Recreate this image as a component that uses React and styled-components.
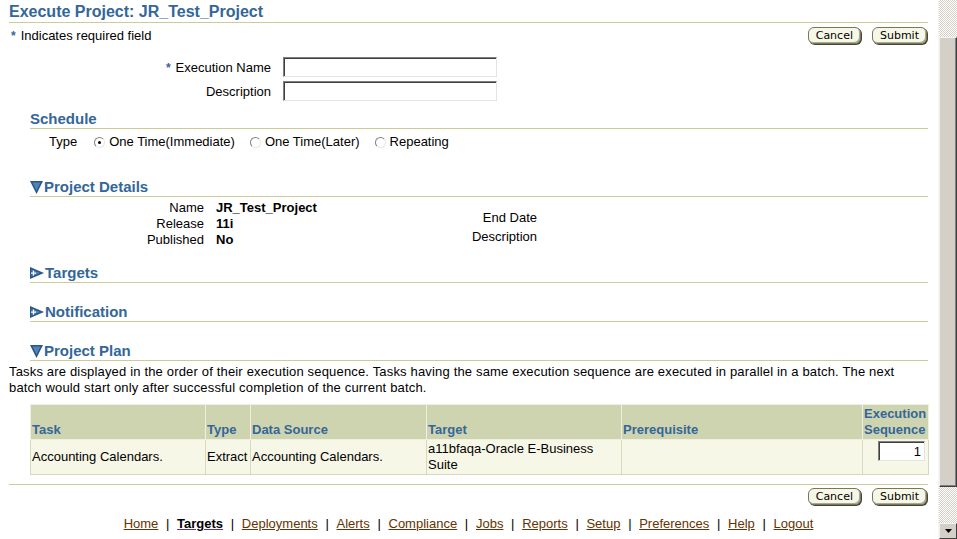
import React from "react"
import styled, { createGlobalStyle } from "styled-components"

const blue = "#336699"
const olive = "#cccc99"

const GlobalStyle = createGlobalStyle`
  html, body {
    margin: 0;
    padding: 0;
    overflow: hidden;
    background: #fff;
  }
  body {
    font-family: "Liberation Sans", Arial, sans-serif;
    font-size: 13px;
    color: #000;
  }
`

const Page = styled.div`
  display: flex;
  height: 539px;
  width: 957px;
`

const Main = styled.div`
  flex: 1;
  padding: 2px 10px 0 9px;
  overflow: hidden;
`

const Title = styled.h1`
  margin: 0;
  font-size: 16px;
  line-height: 20px;
  font-weight: bold;
  color: ${blue};
  border-bottom: 1px solid ${olive};
`

const TopRow = styled.div`
  display: flex;
  align-items: center;
  justify-content: space-between;
  padding-top: ${p => p.top || 4}px;
  padding-right: 1px;
`

const Required = styled.span`
  color: ${blue};
  font-size: 12px;
  font-weight: bold;
  margin-right: 5px;
  margin-left: ${p => p.left || 0}px;
`

const Buttons = styled.div`
  display: flex;
  gap: 11px;
`

const Button = styled.button`
  height: 17px;
  padding: 0 7px;
  font-family: "DejaVu Sans", Verdana, sans-serif;
  font-size: 11px;
  line-height: 14px;
  color: #000;
  background: #f7f7e7;
  border: 1px solid #77775e;
  border-radius: 6px;
  box-shadow: inset -1px -1px 0 #a9a98c, 1px 1px 0 #44443a;
  cursor: pointer;
`

const Form = styled.div`
  display: grid;
  grid-template-columns: 262px 214px;
  column-gap: 12px;
  row-gap: 4px;
  margin-top: 13px;
  align-items: center;
`

const Label = styled.label`
  text-align: right;
`

const TextInput = styled.input`
  box-sizing: border-box;
  width: ${p => p.w || 214}px;
  height: 20px;
  margin: 0;
  padding: 0 3px;
  font-family: "Liberation Sans", Arial, sans-serif;
  font-size: 13px;
  text-align: ${p => (p.right ? "right" : "left")};
  background: #fff;
  border: 1px solid;
  border-color: #7f7f7f #e4e4dc #e4e4dc #7f7f7f;
  box-shadow: inset 1px 1px 0 #404040;
  outline: none;
`

const Section = styled.div`
  margin-left: 21px;
  margin-top: ${p => p.top}px;
`

const Header = styled.h2`
  display: flex;
  align-items: center;
  gap: 1px;
  margin: 0;
  font-size: 15px;
  line-height: 18px;
  font-weight: bold;
  color: ${blue};
  border-bottom: 1px solid ${olive};
`

const TypeRow = styled.div`
  display: flex;
  align-items: center;
  padding: 4px 0 0 19px;
  line-height: 18px;
`

const TypeLabel = styled.span`
  margin-right: 17px;
`

const RadioItem = styled.label`
  display: flex;
  align-items: center;
  gap: 4px;
  margin-right: 15px;
`

const RadioCircle = styled.span`
  position: relative;
  box-sizing: border-box;
  width: 11px;
  height: 11px;
  border-radius: 50%;
  border: 1px solid;
  border-color: #808080 #e8e8e8 #e8e8e8 #808080;
  background: #fff;
  &::after {
    content: "";
    display: ${p => (p.checked ? "block" : "none")};
    position: absolute;
    left: 3px;
    top: 3px;
    width: 3px;
    height: 3px;
    border-radius: 50%;
    background: #000;
  }
`

const Details = styled.div`
  display: flex;
  padding-top: 3px;
  line-height: 16px;
`

const DetailGrid = styled.div`
  display: grid;
  grid-template-columns: ${p => p.cols};
  column-gap: 12px;
  padding-top: ${p => p.top || 0}px;
`

const DLabel = styled.span`
  text-align: right;
`

const DValue = styled.span`
  font-weight: bold;
`

const Para = styled.p`
  margin: 0;
  padding-top: 3px;
  line-height: 16px;
  letter-spacing: 0.17px;
`

const Table = styled.table`
  margin: 8px 0 0 21px;
  width: 898px;
  table-layout: fixed;
  border-collapse: collapse;
  border: 1px solid #dcdfc6;
`

const Th = styled.th`
  height: 33px;
  padding: 0 1px 1px 1px;
  text-align: left;
  vertical-align: bottom;
  font-size: 13px;
  line-height: 16px;
  font-weight: bold;
  color: ${blue};
  background: #cfd4b0;
  border: 1px solid #eef0e2;
  overflow: hidden;
`

const Td = styled.td`
  padding: 1px ${p => (p.right ? 3 : 1)}px 1px 1px;
  vertical-align: ${p => (p.top ? "top" : "middle")};
  text-align: ${p => (p.right ? "right" : "left")};
  font-size: 13px;
  line-height: 16px;
  background: #f7f7e7;
  border: 1px solid #d6d9be;
`

const Divider = styled.div`
  margin-top: 9px;
  border-top: 1px solid ${olive};
`

const Footer = styled.div`
  display: flex;
  justify-content: center;
  margin-top: 11px;
  line-height: 16px;
  font-size: 13px;
`

const FootLink = styled.a`
  color: ${p => (p.active ? "#000" : "#663300")};
  font-weight: ${p => (p.active ? "bold" : "normal")};
  text-decoration: underline;
  text-decoration-color: ${p => (p.active ? "#663366" : "#663300")};
  cursor: pointer;
`

const Sep = styled.span`
  margin: 0 7.7px;
  color: #000;
`

const ScrollBar = styled.div`
  display: flex;
  flex-direction: column;
  width: 19px;
  border-left: 1px solid #f4f4f0;
  box-sizing: border-box;
`

const Track = styled.div`
  height: ${p => (p.h ? p.h + "px" : "auto")};
  flex: ${p => (p.h ? "none" : 1)};
  background-color: #fff;
  background-image: repeating-conic-gradient(#d4d0c8 0 25%, #fff 0 50%);
  background-size: 2px 2px;
`

const Thumb = styled.div`
  height: 450px;
  box-sizing: border-box;
  background: #d4d0c8;
  border: 1px solid;
  border-color: #f2f2ee #404040 #404040 #f2f2ee;
  box-shadow: inset -1px -1px 0 #808080;
`

const ArrowBtn = styled.div`
  height: 16px;
  display: flex;
  align-items: center;
  justify-content: center;
  box-sizing: border-box;
  background: #d4d0c8;
  border: 1px solid;
  border-color: #f2f2ee #404040 #404040 #f2f2ee;
`

const DownIcon = () => (
  <svg width="13" height="13" viewBox="0 0 13 13">
    <polygon points="0,0 13,0 6.5,13" fill="#2a5885" />
    <polygon points="2.5,1.5 10.5,1.5 6.5,9.5" fill="#4f82b5" />
  </svg>
)

const RightIcon = () => (
  <svg width="14" height="12" viewBox="0 0 14 12">
    <polygon points="0,0 14,6 0,12" fill="#2a5885" />
    <polygon points="1.5,2.5 10,6 1.5,9.5" fill="#4f82b5" />
    <rect x="1" y="5.5" width="5" height="1.2" fill="#fff" />
    <rect x="2.9" y="3.6" width="1.2" height="5" fill="#fff" />
  </svg>
)

const Radio = ({ checked, children }) => (
  <RadioItem>
    <RadioCircle checked={checked} />
    {children}
  </RadioItem>
)

const links = ["Home", "Targets", "Deployments", "Alerts", "Compliance", "Jobs", "Reports", "Setup", "Preferences", "Help", "Logout"]

export default function App() {
  return (
    <Page>
      <GlobalStyle />
      <Main>
        <Title>Execute Project: JR_Test_Project</Title>
        <TopRow>
          <span>
            <Required left={2}>*</Required>Indicates required field
          </span>
          <Buttons>
            <Button>Cancel</Button>
            <Button>Submit</Button>
          </Buttons>
        </TopRow>

        <Form>
          <Label>
            <Required>*</Required>Execution Name
          </Label>
          <TextInput />
          <Label>Description</Label>
          <TextInput />
        </Form>

        <Section top={9}>
          <Header>Schedule</Header>
          <TypeRow>
            <TypeLabel>Type</TypeLabel>
            <Radio checked>One Time(Immediate)</Radio>
            <Radio>One Time(Later)</Radio>
            <Radio>Repeating</Radio>
          </TypeRow>
        </Section>

        <Section top={27}>
          <Header>
            <DownIcon />
            Project Details
          </Header>
          <Details>
            <DetailGrid cols="174px 244px">
              <DLabel>Name</DLabel>
              <DValue>JR_Test_Project</DValue>
              <DLabel>Release</DLabel>
              <DValue>11i</DValue>
              <DLabel>Published</DLabel>
              <DValue>No</DValue>
            </DetailGrid>
            <DetailGrid cols="77px" top={10}>
              <DLabel>End Date</DLabel>
              <DLabel>Description</DLabel>
            </DetailGrid>
          </Details>
        </Section>

        <Section top={16}>
          <Header>
            <RightIcon />
            Targets
          </Header>
        </Section>

        <Section top={20}>
          <Header>
            <RightIcon />
            Notification
          </Header>
        </Section>

        <Section top={20}>
          <Header>
            <DownIcon />
            Project Plan
          </Header>
        </Section>
        <Para>
          Tasks are displayed in the order of their execution sequence. Tasks having the same execution sequence are
          executed in parallel in a batch. The next batch would start only after successful completion of the current
          batch.
        </Para>

        <Table>
          <colgroup>
            <col style={{ width: 175 }} />
            <col style={{ width: 45 }} />
            <col style={{ width: 176 }} />
            <col style={{ width: 195 }} />
            <col style={{ width: 241 }} />
            <col style={{ width: 66 }} />
          </colgroup>
          <thead>
            <tr>
              <Th>Task</Th>
              <Th>Type</Th>
              <Th>Data Source</Th>
              <Th>Target</Th>
              <Th>Prerequisite</Th>
              <Th>Execution Sequence</Th>
            </tr>
          </thead>
          <tbody>
            <tr>
              <Td>Accounting Calendars.</Td>
              <Td>Extract</Td>
              <Td>Accounting Calendars.</Td>
              <Td>a11bfaqa-Oracle E-Business Suite</Td>
              <Td></Td>
              <Td top right>
                <TextInput w={47} right defaultValue="1" />
              </Td>
            </tr>
          </tbody>
        </Table>

        <Divider />
        <TopRow top={3}>
          <span />
          <Buttons>
            <Button>Cancel</Button>
            <Button>Submit</Button>
          </Buttons>
        </TopRow>

        <Footer>
          {links.map((l, i) => (
            <React.Fragment key={l}>
              {i > 0 && <Sep>|</Sep>}
              <FootLink active={l === "Targets"}>{l}</FootLink>
            </React.Fragment>
          ))}
        </Footer>
      </Main>
      <ScrollBar>
        <Track h={37} />
        <Thumb />
        <Track />
        <ArrowBtn>
          <svg width="7" height="4" viewBox="0 0 7 4">
            <polygon points="0,0 7,0 3.5,4" fill="#000" />
          </svg>
        </ArrowBtn>
      </ScrollBar>
    </Page>
  )
}
